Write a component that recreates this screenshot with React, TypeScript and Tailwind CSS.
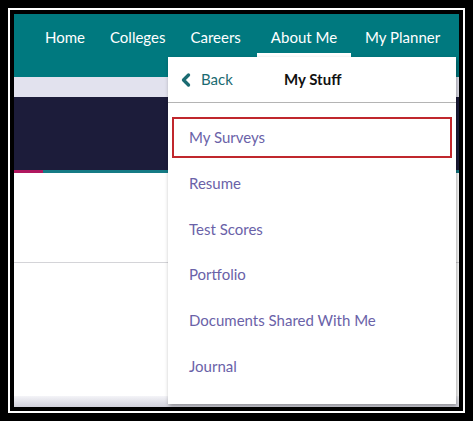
import { ChevronLeft } from 'lucide-react';

const navItems = ['Home', 'Colleges', 'Careers', 'About Me', 'My Planner'];

const stuffItems = [
  'My Surveys',
  'Resume',
  'Test Scores',
  'Portfolio',
  'Documents Shared With Me',
  'Journal',
];

export default function App() {
  return (
    <div className="w-[473px] h-[421px] bg-black p-2" style={{ fontFamily: 'Lato, "Open Sans", sans-serif' }}>
      <div className="h-full border-2 border-white bg-black p-1">
        <div className="relative h-full bg-white overflow-hidden flex flex-col">
          {/* top nav */}
          <div className="h-[63px] bg-[#00797f] shrink-0">
            <nav className="flex gap-[25px] pl-[31px] pt-[13px] text-[15px] leading-5 text-white">
              {navItems.map((item) => (
                <div key={item} className={`relative ${item === 'About Me' ? 'ml-[5px] mr-[3px]' : ''}`}>
                  {item}
                  {item === 'About Me' && (
                    <span className="absolute -left-[14px] -right-[14px] top-[26px] h-[4px] bg-white" />
                  )}
                </div>
              ))}
            </nav>
          </div>

          <div className="h-[20px] bg-[#e2e2ee] shrink-0" />
          <div className="h-[73px] bg-[#1c1c3a] shrink-0" />
          <div className="flex h-[3px] shrink-0">
            <div className="w-[29px] bg-[#b0175f]" />
            <div className="flex-1 bg-[#157b85]" />
          </div>
          <div className="h-[89px] shrink-0" />
          <div className="h-px bg-[#d4d4d8] shrink-0" />
          <div className="flex-1" />
          <div className="h-[11px] bg-gradient-to-b from-[#f4f4f8] to-[#d0d0da] shrink-0" />

          {/* My Stuff dropdown */}
          <div className="absolute left-[154px] top-[43px] w-[288px] h-[347px] bg-white shadow-[1px_2px_4px_rgba(0,0,0,0.35)]">
            <div className="relative h-[46px] border-b border-[#b4b4b4] flex items-center">
              <div className="flex items-center pl-[8px] text-[15px] text-[#1b6b72]">
                <ChevronLeft size={20} strokeWidth={4} className="text-[#1b6b72]" />
                <span className="ml-[5px]">Back</span>
              </div>
              <span className="absolute left-[116px] text-[15px] font-bold text-[#111]">My Stuff</span>
            </div>
            <ul className="flex flex-col gap-[4.7px] pt-[14px] px-1">
              {stuffItems.map((item, i) => (
                <li
                  key={item}
                  className={`h-[41px] flex items-center pl-[15px] text-[15px] text-[#6a62a8] border-2 ${
                    i === 0 ? 'border-[#c0272d]' : 'border-transparent'
                  }`}
                >
                  {item}
                </li>
              ))}
            </ul>
          </div>
        </div>
      </div>
    </div>
  );
}
